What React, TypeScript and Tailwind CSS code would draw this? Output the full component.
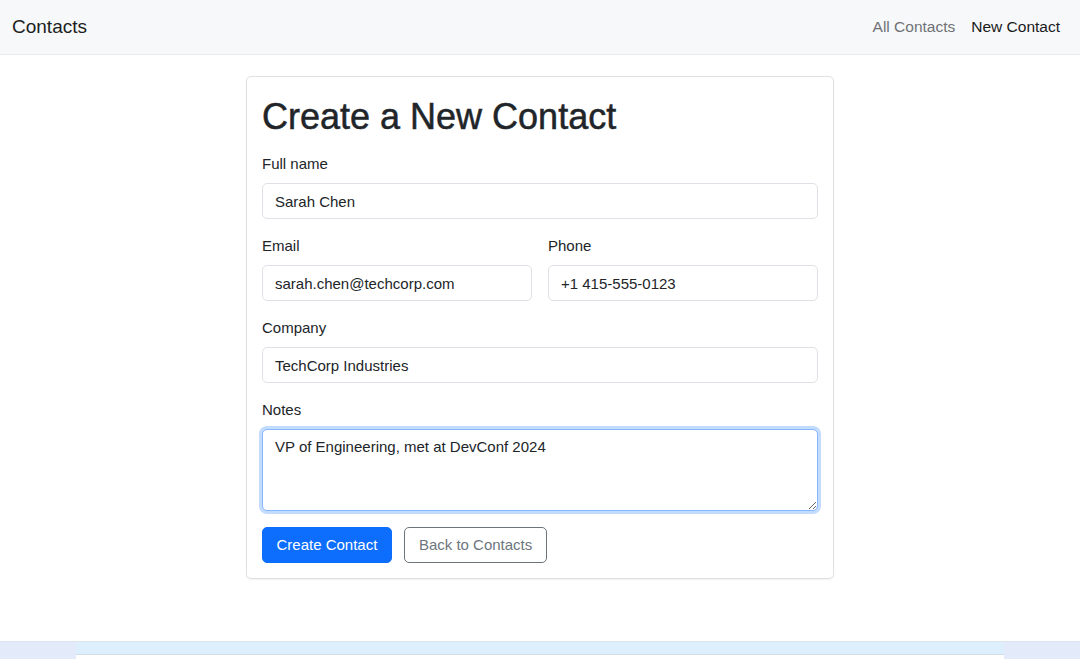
import { useState } from "react";

// Formulario de nuevo contacto
const App = () => {
  const [form, setForm] = useState({
    name: "Sarah Chen",
    email: "sarah.chen@techcorp.com",
    phone: "+1 415-555-0123",
    company: "TechCorp Industries",
    notes: "VP of Engineering, met at DevConf 2024",
  });

  const handleChange = (e: React.ChangeEvent<HTMLInputElement | HTMLTextAreaElement>) => {
    const { name, value } = e.target;
    setForm({ ...form, [name]: value });
  };

  const inputClass =
    "block w-full h-[36px] px-3 border border-[#dee2e6] rounded-[5px] bg-white text-[15px] text-[#212529] outline-none";
  const labelClass = "block text-[15px] leading-[22.5px] mb-[7.5px]";

  return (
    <div className="min-h-screen bg-white text-[#212529] font-['Liberation_Sans',Arial,sans-serif]">
      {/* Barra de navegación */}
      <nav className="h-[55px] bg-[#f6f8fa] border-b border-[#e8eaec] flex items-center justify-between pl-3 pr-[20px]">
        <span className="text-[19px] text-[#1c1e21]">Contacts</span>
        <div className="flex items-center gap-4 text-[15.5px]">
          <a className="text-[#6f7275]">All Contacts</a>
          <a className="text-[#1a1a1a]">New Contact</a>
        </div>
      </nav>

      {/* Tarjeta del formulario */}
      <main className="pt-[21px]">
        <div className="w-[588px] mx-auto border border-[#dfe2e5] rounded-[5px] shadow-[0_1px_2px_rgba(0,0,0,0.06)] px-[15px] pt-[18px] pb-[15px]">
          <h1 className="text-[36px] leading-[1.2] text-[#212529] [-webkit-text-stroke:0.5px_#212529] mb-[15px]">
            Create a New Contact
          </h1>

          <div className="mb-4">
            <label className={labelClass}>Full name</label>
            <input name="name" value={form.name} onChange={handleChange} className={inputClass} />
          </div>

          <div className="grid grid-cols-2 gap-4 mb-4">
            <div>
              <label className={labelClass}>Email</label>
              <input name="email" value={form.email} onChange={handleChange} className={inputClass} />
            </div>
            <div>
              <label className={labelClass}>Phone</label>
              <input name="phone" value={form.phone} onChange={handleChange} className={inputClass} />
            </div>
          </div>

          <div className="mb-4">
            <label className={labelClass}>Company</label>
            <input name="company" value={form.company} onChange={handleChange} className={inputClass} />
          </div>

          <div className="mb-4">
            <label className={labelClass}>Notes</label>
            <textarea
              name="notes"
              value={form.notes}
              onChange={handleChange}
              className="block w-full h-[82px] px-3 py-[6px] border border-[#86b7fe] rounded-[5px] bg-white text-[15px] leading-[22.5px] text-[#212529] outline-none shadow-[0_0_0_3px_rgba(13,110,253,0.25)] resize-y"
            />
          </div>

          <div className="flex items-center gap-3">
            <button className="h-[36px] px-[13.5px] rounded-[5px] bg-[#0d6efd] border border-[#0d6efd] text-white text-[15px]">
              Create Contact
            </button>
            <button className="h-[36px] px-[14px] rounded-[5px] bg-white border border-[#6c757d] text-[#6c757d] text-[15px]">
              Back to Contacts
            </button>
          </div>
        </div>
      </main>

      {/* Franja inferior */}
      <div className="mt-[62px] bg-[#e3ebfb] border-t border-[#dde3ea]">
        <div className="mx-[76px] h-[13px] bg-[#ddeefd] border-b border-[#d5dde6]"></div>
        <div className="mx-[76px] h-[10px] bg-white"></div>
      </div>
    </div>
  );
};

export default App;
